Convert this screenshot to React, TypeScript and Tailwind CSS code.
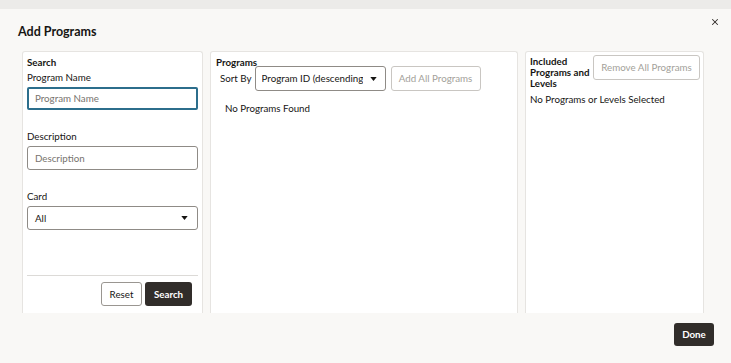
import { X } from "lucide-react";

const Caret = () => (
  <svg className="h-[4px] w-[7px] shrink-0" viewBox="0 0 8 5" fill="currentColor">
    <path d="M0 0h8L4 5z" />
  </svg>
);

const App = () => {
  return (
    <div
      className="relative flex h-[363px] w-[731px] flex-col overflow-hidden bg-[#f9f8f6] text-[#161513]"
      style={{ fontFamily: 'Lato, "Noto Sans", sans-serif' }}
    >
      <div className="h-[9px] bg-[#ecebe9]" />

      <button type="button" className="absolute right-[11px] top-[17px] text-[#312d2a]">
        <X className="h-[10px] w-[10px]" strokeWidth={2.5} />
      </button>

      <h1 className="ml-[18px] mt-[14px] text-[12.5px] font-bold leading-[17px]">Add Programs</h1>

      <div className="ml-[22px] mt-[11px] flex h-[262px] gap-[7px] overflow-hidden text-[9.75px]">
        {/* Search */}
        <div className="flex w-[181px] flex-col rounded-t-[3px] border border-b-0 border-[#e6e4e1] bg-white px-[4px] pt-[3px]">
          <p className="font-bold leading-[14px]">Search</p>
          <p className="mt-[1px] leading-[14px]">Program Name</p>
          <div className="mt-[3px] flex h-[23px] items-center rounded-[2px] border-2 border-[#2c6e8c] px-[6px] text-[#77736e]">
            Program Name
          </div>
          <p className="mt-[19px] leading-[14px]">Description</p>
          <div className="mt-[3px] flex h-[24px] items-center rounded-[3px] border border-[#8f8b86] px-[7px] text-[#77736e]">
            Description
          </div>
          <p className="mt-[19px] leading-[14px]">Card</p>
          <div className="mt-[3px] flex h-[24px] items-center justify-between rounded-[3px] border border-[#8f8b86] pl-[7px] pr-[9px]">
            <span>All</span>
            <Caret />
          </div>
          <div className="mt-[45px] border-t border-[#dcdad7]" />
          <div className="mt-[6px] flex justify-end gap-[3px] pr-[6px]">
            <button
              type="button"
              className="h-[24px] w-[41px] rounded-[3px] border border-[#9a9691] bg-white"
            >
              Reset
            </button>
            <button
              type="button"
              className="h-[24px] w-[47px] rounded-[3px] bg-[#312d2a] font-bold text-white"
            >
              Search
            </button>
          </div>
        </div>

        {/* Programs */}
        <div className="flex w-[308px] flex-col rounded-t-[3px] border border-b-0 border-[#e6e4e1] bg-white px-[5px] pt-[3px]">
          <p className="font-bold leading-[14px]">Programs</p>
          <div className="-mt-[3px] flex items-start">
            <span className="ml-[4px] mt-[5px] leading-[14px]">Sort By</span>
            <div className="ml-[3px] flex h-[25px] w-[131px] items-center justify-between rounded-[3px] border border-[#8f8b86] pl-[6px] pr-[8px]">
              <span className="w-[101px] overflow-hidden whitespace-nowrap">Program ID (descending)</span>
              <Caret />
            </div>
            <button
              type="button"
              className="ml-[5px] h-[25px] w-[90px] rounded-[3px] border border-[#c9c6c2] bg-white text-[#a39f9a]"
            >
              Add All Programs
            </button>
          </div>
          <p className="ml-[9px] mt-[10px] leading-[14px]">No Programs Found</p>
        </div>

        {/* Included */}
        <div className="flex w-[179px] flex-col rounded-t-[3px] border border-b-0 border-[#e6e4e1] bg-white px-[4px] pt-[3px]">
          <div className="flex items-start justify-between">
            <p className="mt-[1px] whitespace-nowrap font-bold leading-[11px]">
              Included
              <br />
              Programs and
              <br />
              Levels
            </p>
            <button
              type="button"
              className="mr-[-1px] h-[25px] w-[107px] shrink-0 rounded-[3px] border border-[#c9c6c2] bg-white text-[#a39f9a]"
            >
              Remove All Programs
            </button>
          </div>
          <p className="mt-[3px] leading-[14px]">No Programs or Levels Selected</p>
        </div>
      </div>

      <div className="flex justify-end pr-[17px] pt-[10px]">
        <button
          type="button"
          className="h-[23px] w-[40px] rounded-[3px] bg-[#312d2a] text-[9.75px] font-bold text-white"
        >
          Done
        </button>
      </div>
    </div>
  );
};

export default App;
